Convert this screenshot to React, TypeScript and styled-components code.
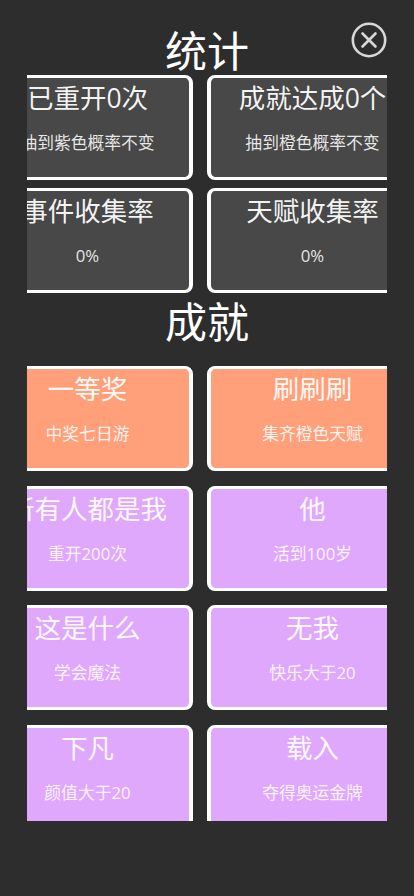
import styled, { createGlobalStyle } from "styled-components";

const GlobalStyle = createGlobalStyle`
    html, body {
        margin: 0;
        padding: 0;
        background: #2d2d2d;
    }
`;

type Tone = "plain" | "orange" | "purple";

const toneColors: Record<Tone, string> = {
    plain: "#484848",
    orange: "#ffa07a",
    purple: "#e0a8fd",
};

const stats: { title: string; desc: string }[] = [
    { title: "已重开0次", desc: "抽到紫色概率不变" },
    { title: "成就达成0个", desc: "抽到橙色概率不变" },
    { title: "事件收集率", desc: "0%" },
    { title: "天赋收集率", desc: "0%" },
];

const achievements: { title: string; desc: string; tone: Tone }[] = [
    { title: "一等奖", desc: "中奖七日游", tone: "orange" },
    { title: "刷刷刷", desc: "集齐橙色天赋", tone: "orange" },
    { title: "所有人都是我", desc: "重开200次", tone: "purple" },
    { title: "他", desc: "活到100岁", tone: "purple" },
    { title: "这是什么", desc: "学会魔法", tone: "purple" },
    { title: "无我", desc: "快乐大于20", tone: "purple" },
    { title: "下凡", desc: "颜值大于20", tone: "purple" },
    { title: "载入", desc: "夺得奥运金牌", tone: "purple" },
];

const Page = styled.div`
    position: relative;
    width: 414px;
    height: 896px;
    overflow: hidden;
    background: #2d2d2d;
    font-family: "Open Sans", "Noto Sans CJK SC", "Liberation Sans", sans-serif;
    color: #fff;
`;

const Scroller = styled.div`
    box-sizing: border-box;
    width: 360px;
    height: 821px;
    margin: 0 auto;
    padding-top: 23px;
    overflow: hidden;
`;

const Title = styled.h1`
    margin: 0;
    font-size: 42px;
    font-weight: 400;
    text-align: center;
`;

const StatsTitle = styled(Title)`
    height: 52px;
    line-height: 55px;
`;

const AchievementTitle = styled(Title)`
    height: 73px;
    line-height: 58px;
`;

const Grid = styled.div<{ $rowGap: number }>`
    display: grid;
    grid-template-columns: 211px 211px;
    column-gap: 14px;
    row-gap: ${(p) => p.$rowGap}px;
    margin-left: -45px;
    width: 436px;
`;

const Card = styled.div<{ $tone: Tone }>`
    box-sizing: border-box;
    height: 105px;
    padding-top: 1px;
    border-style: solid;
    border-color: #fff;
    border-width: 3px 4px;
    border-radius: 8px;
    background: ${(p) => toneColors[p.$tone]};
    display: flex;
    flex-direction: column;
    align-items: center;
    white-space: nowrap;
`;

const CardTitle = styled.div`
    height: 38px;
    font-size: 26.5px;
    line-height: 38px;
    color: rgba(255, 255, 255, 0.95);
`;

const CardDesc = styled.div`
    margin-top: 14px;
    font-size: 16.8px;
    line-height: 24px;
    color: rgba(255, 255, 255, 0.88);
`;

const CloseButton = styled.button`
    position: absolute;
    top: 22px;
    left: 351px;
    width: 36px;
    height: 36px;
    padding: 0;
    border: 0;
    background: transparent;
    cursor: pointer;
`;

export default function App() {
    return (
        <Page>
            <GlobalStyle />
            <Scroller>
                <StatsTitle>统计</StatsTitle>
                <Grid $rowGap={8}>
                    {stats.map((item) => (
                        <Card key={item.title} $tone="plain">
                            <CardTitle>{item.title}</CardTitle>
                            <CardDesc>{item.desc}</CardDesc>
                        </Card>
                    ))}
                </Grid>
                <AchievementTitle>成就</AchievementTitle>
                <Grid $rowGap={14.5}>
                    {achievements.map((item) => (
                        <Card key={item.title} $tone={item.tone}>
                            <CardTitle>{item.title}</CardTitle>
                            <CardDesc>{item.desc}</CardDesc>
                        </Card>
                    ))}
                </Grid>
            </Scroller>
            <CloseButton aria-label="关闭">
                <svg width="36" height="36" viewBox="0 0 36 36" fill="none" stroke="#d8d8d8" strokeWidth="2.6">
                    <circle cx="18" cy="18" r="16.2" />
                    <path d="M11.5 11.5 L24.5 24.5 M24.5 11.5 L11.5 24.5" strokeLinecap="round" />
                </svg>
            </CloseButton>
        </Page>
    );
}
